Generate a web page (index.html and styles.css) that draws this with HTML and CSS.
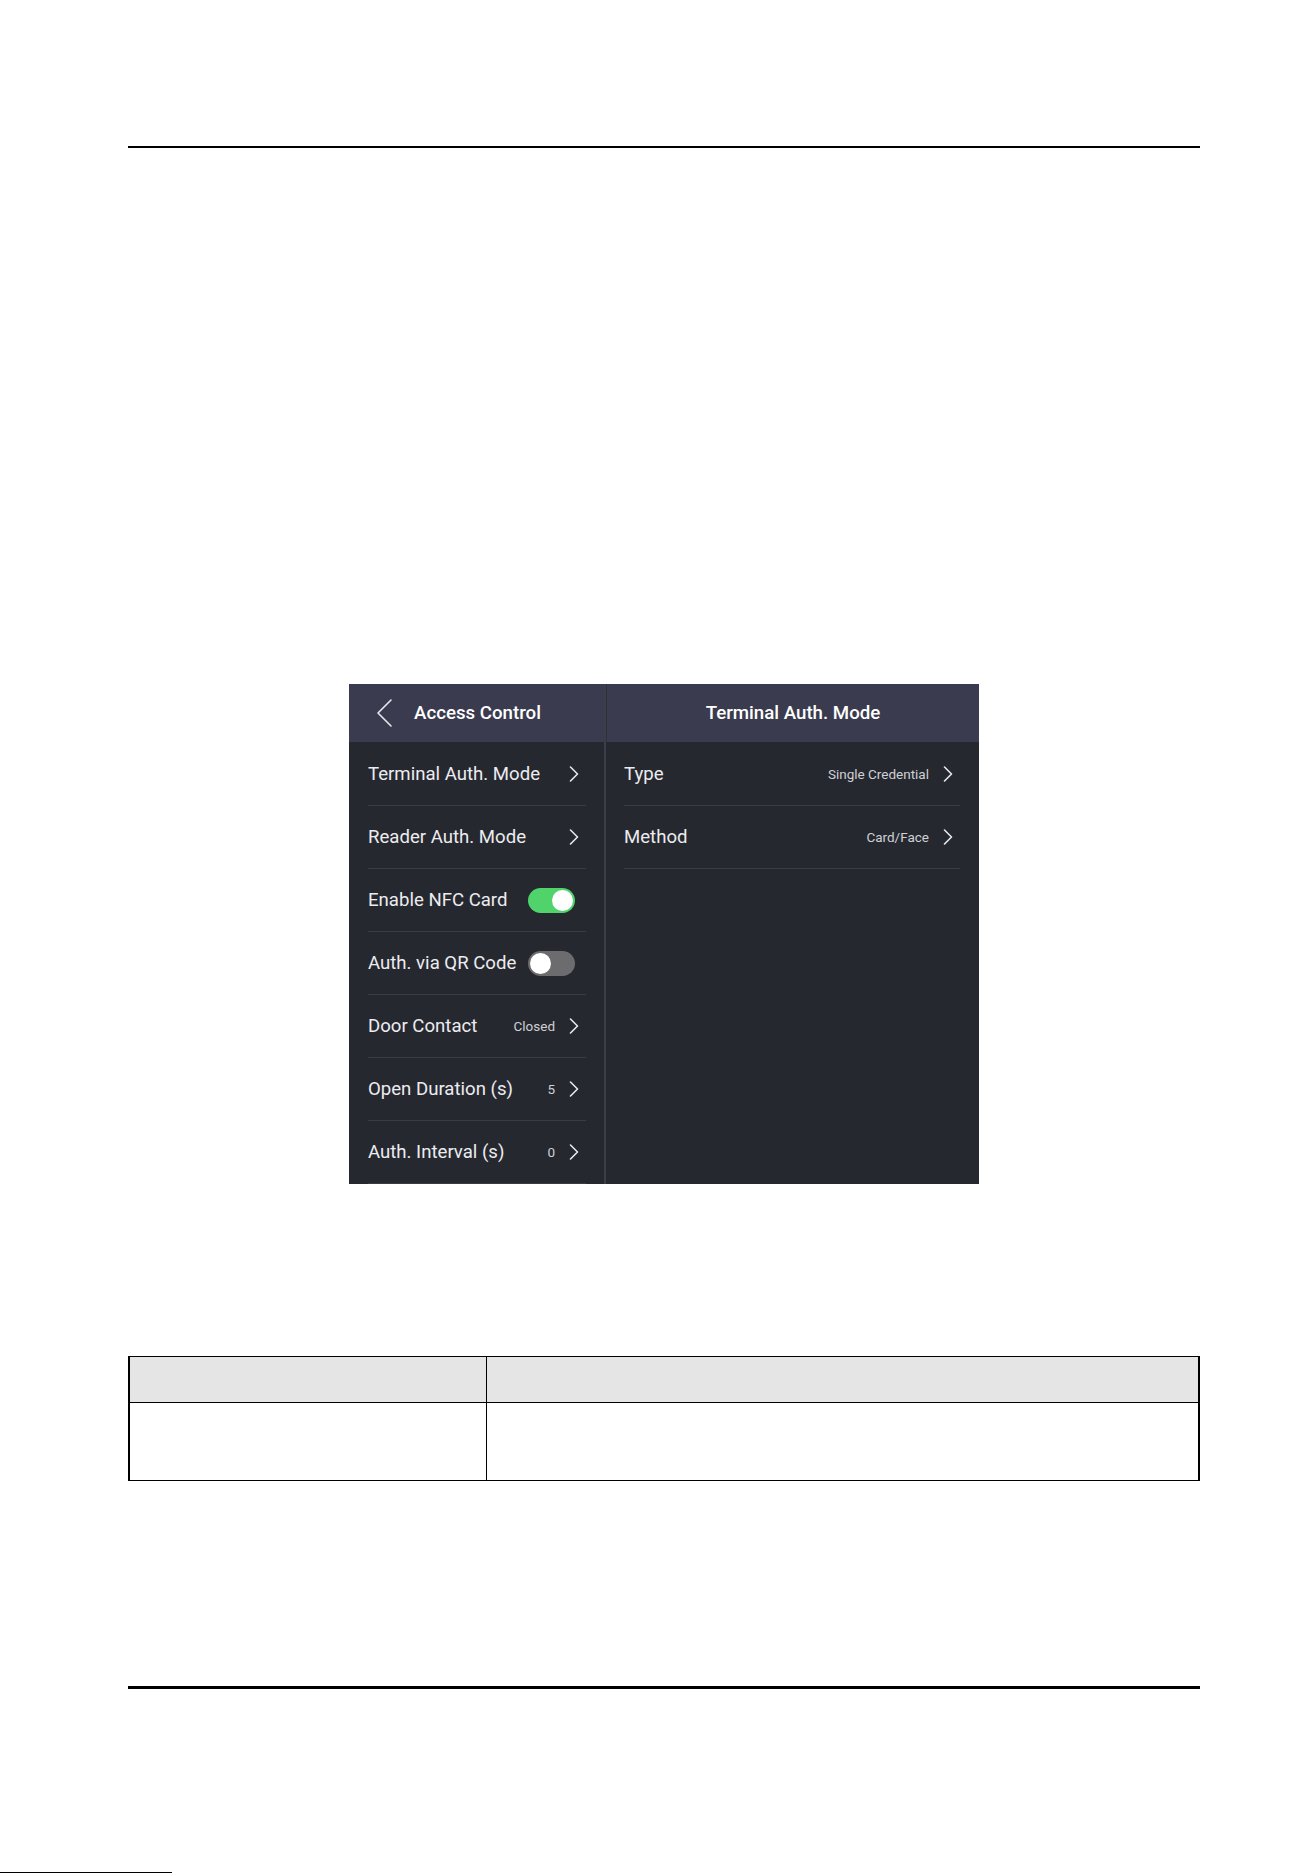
FILE: index.html
```html
<!DOCTYPE html>
<html lang="en">
<head>
    <meta charset="UTF-8">
    <meta name="viewport" content="width=device-width, initial-scale=1.0">
    <title>Access Control</title>
    <link rel="stylesheet" href="styles.css">
</head>
<body>
    <div class="page">
        <div class="rule rule-top"></div>

        <!-- Device screen: access control settings -->
        <div class="screen">
            <div class="pane pane-menu">
                <div class="bar">
                    <svg class="back" width="17" height="28" viewBox="0 0 17 28">
                        <path d="M15 1 L2 14 L15 27" />
                    </svg>
                    <span class="bar-title">Access Control</span>
                </div>
                <ul class="list">
                    <li class="row">
                        <span class="label">Terminal Auth. Mode</span>
                        <svg class="chev" width="10" height="16" viewBox="0 0 10 16"><path d="M1.5 1 L8.5 8 L1.5 15" /></svg>
                    </li>
                    <li class="row">
                        <span class="label">Reader Auth. Mode</span>
                        <svg class="chev" width="10" height="16" viewBox="0 0 10 16"><path d="M1.5 1 L8.5 8 L1.5 15" /></svg>
                    </li>
                    <li class="row">
                        <span class="label">Enable NFC Card</span>
                        <span class="switch on"><span class="knob"></span></span>
                    </li>
                    <li class="row">
                        <span class="label">Auth. via QR Code</span>
                        <span class="switch"><span class="knob"></span></span>
                    </li>
                    <li class="row">
                        <span class="label">Door Contact</span>
                        <span class="value">Closed</span>
                        <svg class="chev" width="10" height="16" viewBox="0 0 10 16"><path d="M1.5 1 L8.5 8 L1.5 15" /></svg>
                    </li>
                    <li class="row">
                        <span class="label">Open Duration (s)</span>
                        <span class="value">5</span>
                        <svg class="chev" width="10" height="16" viewBox="0 0 10 16"><path d="M1.5 1 L8.5 8 L1.5 15" /></svg>
                    </li>
                    <li class="row">
                        <span class="label">Auth. Interval (s)</span>
                        <span class="value">0</span>
                        <svg class="chev" width="10" height="16" viewBox="0 0 10 16"><path d="M1.5 1 L8.5 8 L1.5 15" /></svg>
                    </li>
                </ul>
            </div>

            <div class="pane pane-detail">
                <div class="bar bar-center">
                    <span class="bar-title">Terminal Auth. Mode</span>
                </div>
                <ul class="list">
                    <li class="row">
                        <span class="label">Type</span>
                        <span class="value">Single Credential</span>
                        <svg class="chev" width="10" height="16" viewBox="0 0 10 16"><path d="M1.5 1 L8.5 8 L1.5 15" /></svg>
                    </li>
                    <li class="row">
                        <span class="label">Method</span>
                        <span class="value">Card/Face</span>
                        <svg class="chev" width="10" height="16" viewBox="0 0 10 16"><path d="M1.5 1 L8.5 8 L1.5 15" /></svg>
                    </li>
                </ul>
            </div>
        </div>

        <table class="params">
            <thead>
                <tr>
                    <th class="col-name"></th>
                    <th></th>
                </tr>
            </thead>
            <tbody>
                <tr>
                    <td></td>
                    <td></td>
                </tr>
            </tbody>
        </table>

        <div class="rule rule-bottom"></div>
    </div>
    <div class="edge-mark"></div>
</body>
</html>
```

FILE: styles.css
```css
body {
    margin: 0;
    padding: 0;
    background: #fff;
    font-family: 'Roboto', 'Liberation Sans', sans-serif;
}

.page {
    width: 1072px;
    padding-left: 128px;
}

.rule {
    background: #000;
}

.rule-top {
    height: 2px;
    margin-top: 146px;
}

.rule-bottom {
    height: 3px;
    margin-top: 205px;
}

/* Device screen */
.screen {
    display: flex;
    width: 630px;
    height: 500px;
    margin: 536px auto 0;
    background: #262830;
    color: #ececef;
}

.pane-menu {
    width: 255px;
    border-right: 2px solid #3b3e48;
}

.pane-detail {
    flex: 1;
}

.bar {
    display: flex;
    align-items: center;
    height: 58px;
    background: #3a3b4e;
}

.pane-menu .bar {
    padding-left: 27px;
}

.pane-detail .bar {
    border-left: 1px solid #2e303b;
}

.bar-center {
    justify-content: center;
}

.back {
    margin-right: 21px;
}

.back path,
.chev path {
    fill: none;
    stroke: #e8e8ec;
    stroke-width: 1.6;
    stroke-linecap: round;
    stroke-linejoin: round;
}

.bar-title {
    font-size: 18.7px;
    font-weight: 500;
    color: #fff;
}

.list {
    list-style: none;
    margin: 0;
    padding: 0;
}

.row {
    display: flex;
    align-items: center;
    height: 62px;
    margin-top: 1px;
    margin-bottom: -1px;
    border-bottom: 1px solid #3a3c46;
}

.pane-menu .row {
    margin-left: 19px;
    margin-right: 18px;
}

.pane-detail .row {
    margin-left: 18px;
    margin-right: 19px;
}

.label {
    flex: 1;
    font-size: 18.6px;
    white-space: nowrap;
}

.value {
    font-size: 13.5px;
    color: #cfd0d4;
    margin-right: 14px;
}

.chev {
    margin-right: 7px;
}

/* Toggle switches */
.switch {
    position: relative;
    width: 47px;
    height: 25px;
    border-radius: 13px;
    background: #6c6c6e;
    margin-right: 11px;
}

.switch.on {
    background: #4fd36a;
}

.knob {
    position: absolute;
    top: 2px;
    left: 2px;
    width: 21px;
    height: 21px;
    border-radius: 50%;
    background: #fff;
}

.switch.on .knob {
    left: 24px;
}

/* Parameter table */
.params {
    width: 1072px;
    margin-top: 172px;
    border-collapse: collapse;
    border-left: 2px solid #000;
    border-right: 2px solid #000;
}

.params th,
.params td {
    border: 1px solid #000;
    padding: 0;
}

.params th {
    height: 45px;
    background: #e5e5e5;
}

.params td {
    height: 77px;
}

.params .col-name {
    width: 356px;
}

.edge-mark {
    width: 172px;
    height: 1px;
    margin-top: 183px;
    background: #000;
}
```
